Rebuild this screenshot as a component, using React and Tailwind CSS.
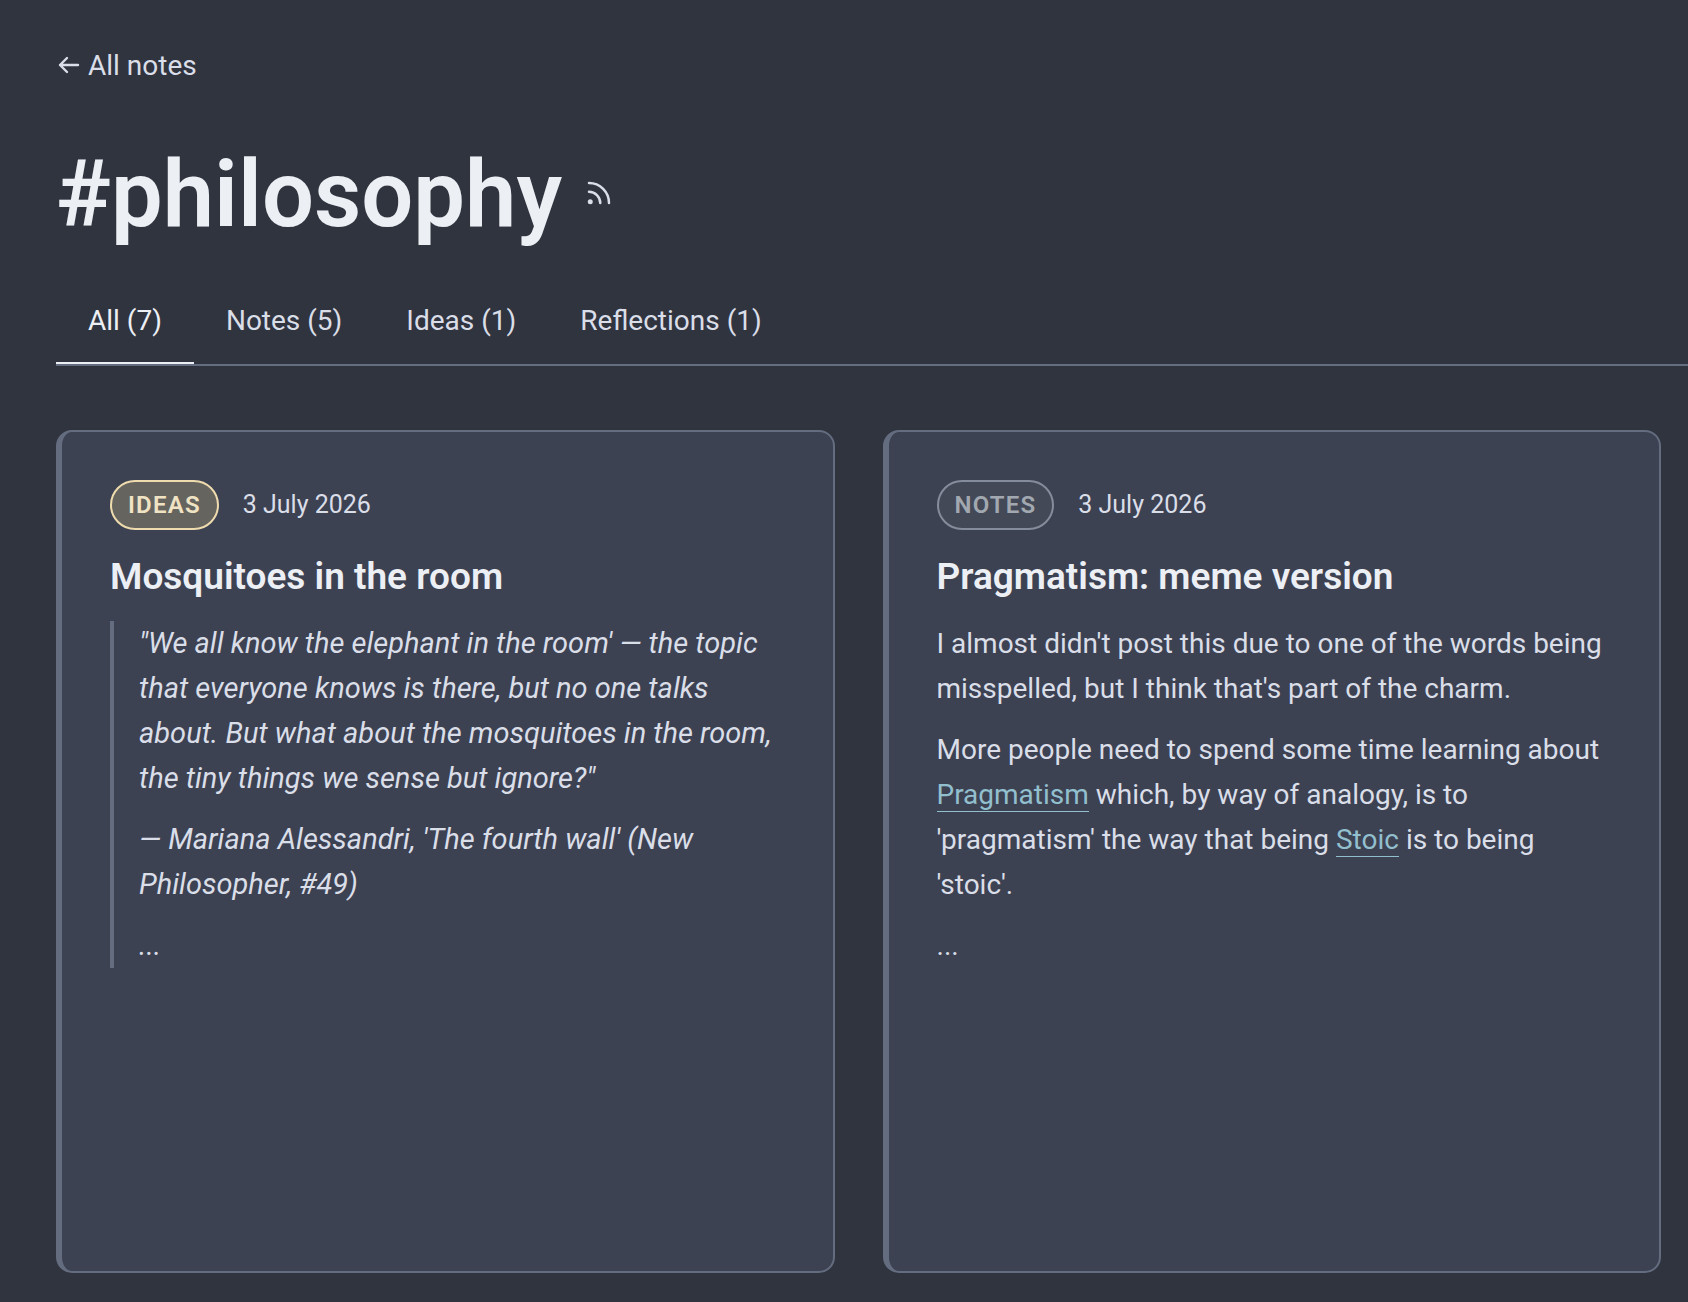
import { useState } from 'react';
import { Rss } from 'lucide-react';

const TABS = [
  { value: 'all', label: 'All', count: 7 },
  { value: 'notes', label: 'Notes', count: 5 },
  { value: 'ideas', label: 'Ideas', count: 1 },
  { value: 'reflections', label: 'Reflections', count: 1 },
];

const BADGE_STYLES = {
  ideas: 'border-[#efdcae] bg-[#66645f] text-[#f0e3c3]',
  notes: 'border-[#858c9b] bg-[#444958] text-[#a2a8b0]',
};

function ArrowLeft() {
  return (
    <svg width="24" height="20" viewBox="0 0 24 20" fill="none" stroke="currentColor" strokeWidth="2.4" strokeLinecap="round" strokeLinejoin="round" aria-hidden="true">
      <path d="M22 9H4M11 2L4 9l7 7" />
    </svg>
  );
}

function TextLink({ href, children }) {
  return <a href={href} className="border-b border-[#92bfce] text-[#92bfce]">{children}</a>;
}

function NoteCard({ type, date, title, children }) {
  return (
    <article className="min-h-[843px] rounded-2xl border-2 border-l-6 border-[#646d7f] bg-[#3d4252] p-12">
      <div className="flex items-center gap-6">
        <span className={`rounded-full border-2 px-4 text-2xl leading-[46px] font-semibold tracking-wider uppercase ${BADGE_STYLES[type]}`}>{type}</span>
        <time className="text-[25px] leading-[46px]">{date}</time>
      </div>
      <h2 className="mt-6 mb-[22px] text-[37px] leading-[45px] font-semibold text-[#eceff4]">{title}</h2>
      {children}
    </article>
  );
}

export default function App() {
  const [tab, setTab] = useState('all');

  return (
    <main className="min-h-screen bg-[#30343f] pt-11 pb-7 pl-14 font-['Roboto',sans-serif] text-[28px] leading-[45px] text-[#dadee8]">
      <a href="#notes" className="flex w-fit items-center gap-2 leading-11">
        <ArrowLeft />
        All notes
      </a>

      <div className="mt-[61px] flex items-center gap-[22px]">
        <h1 className="text-[92px] leading-none font-semibold text-[#eceff4]">#philosophy</h1>
        <a href="#feed" aria-label="RSS feed" className="pb-1">
          <Rss size={30} strokeWidth={2} />
        </a>
      </div>

      <div role="tablist" className="mt-10 flex border-b-2 border-[#646d7f]">
        {TABS.map((t) => (
          <button
            key={t.value}
            type="button"
            role="tab"
            aria-selected={tab === t.value}
            onClick={() => setTab(t.value)}
            className={`cursor-pointer border-b-2 px-8 pt-[18px] pb-[19px] leading-11 ${tab === t.value ? 'border-[#eceff4] text-[#eceff4]' : 'border-transparent'}`}
          >
            {t.label} ({t.count})
          </button>
        ))}
      </div>

      <div className="mt-16 grid grid-cols-2 gap-12 pr-[27px]">
        <NoteCard type="ideas" date="3 July 2026" title="Mosquitoes in the room">
          <blockquote className="flex flex-col gap-4 border-l-4 border-[#646d7f] pl-[25px] text-[29px] italic">
            <p>"We all know the elephant in the room' — the topic that everyone knows is there, but no one talks about. But what about the mosquitoes in the room, the tiny things we sense but ignore?"</p>
            <p>— Mariana Alessandri, 'The fourth wall' (New Philosopher, #49)</p>
            <p>...</p>
          </blockquote>
        </NoteCard>

        <NoteCard type="notes" date="3 July 2026" title="Pragmatism: meme version">
          <div className="flex flex-col gap-4">
            <p>I almost didn't post this due to one of the words being misspelled, but I think that's part of the charm.</p>
            <p>
              More people need to spend some time learning about <TextLink href="#pragmatism">Pragmatism</TextLink> which, by way of analogy, is to 'pragmatism' the way that being <TextLink href="#stoic">Stoic</TextLink> is to being 'stoic'.
            </p>
            <p>...</p>
          </div>
        </NoteCard>
      </div>
    </main>
  );
}
